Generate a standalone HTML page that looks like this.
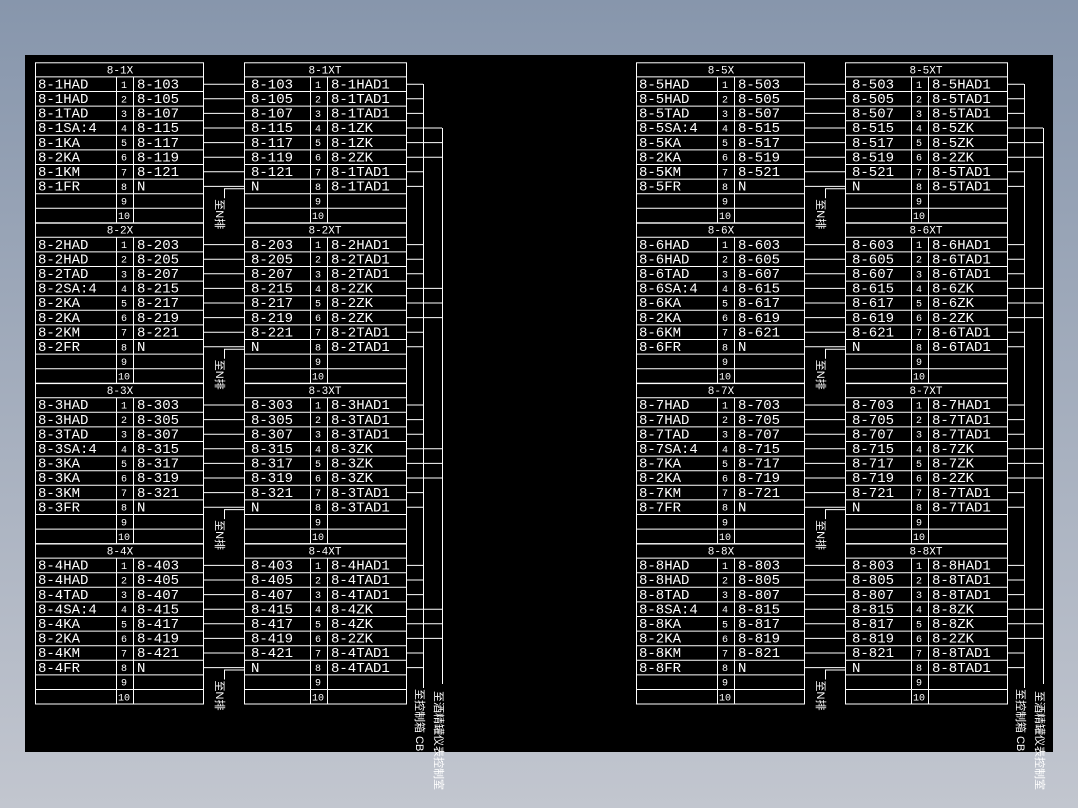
<!DOCTYPE html>
<html><head><meta charset="utf-8"><style>
html,body{margin:0;padding:0;width:1078px;height:808px;overflow:hidden;background:linear-gradient(#8796ac,#c2c6cf);}
svg{position:absolute;left:0;top:0}
.t{fill:#fff;font-family:"Liberation Mono",monospace;font-size:14px}
.h{fill:#fff;font-family:"Liberation Mono",monospace;font-size:11px;text-anchor:middle}
.n{fill:#fff;font-family:"Liberation Mono",monospace;font-size:10px;text-anchor:middle}
.c{fill:#fff;font-family:"Liberation Sans","Noto Sans CJK SC",sans-serif;font-size:11px}
</style></head><body>
<svg width="1078" height="808" viewBox="0 0 1078 808">
<rect x="25" y="55" width="1028" height="697" fill="#000"/>
<defs>
<g id="g" stroke="#fff" stroke-width="1" fill="none">
<rect x="35.5" y="0.5" width="168" height="160"/>
<rect x="244.5" y="0.5" width="162" height="160"/>
<path d="M35 14.6H204M35 29.2H204M35 43.8H204M35 58.4H204M35 73H204M35 87.6H204M35 102.2H204M35 116.8H204M35 131.4H204M35 146H204
M244 14.6H407M244 29.2H407M244 43.8H407M244 58.4H407M244 73H407M244 87.6H407M244 102.2H407M244 116.8H407M244 131.4H407M244 146H407
M116.5 14.6V160.5M133.5 14.6V160.5M310.5 14.6V160.5M327.5 14.6V160.5
M204 21.9H244M204 36.5H244M204 51.1H244M204 65.7H244M204 80.3H244M204 94.9H244M204 109.5H244M204 124.1H244
M224.5 134V126.5H244M224.5 134V136
M407 21.9H423M407 36.5H423M407 51.1H423M407 109.5H423M407 124.1H423
M407 65.7H442M407 80.3H442M407 94.9H442"/>
<g stroke="none" fill="#fff">
<text class="n" x="124" y="25.5">1</text><text class="n" x="124" y="40">2</text><text class="n" x="124" y="54.6">3</text><text class="n" x="124" y="69.2">4</text><text class="n" x="124" y="83.8">5</text><text class="n" x="124" y="98.4">6</text><text class="n" x="124" y="113">7</text><text class="n" x="124" y="127.6">8</text><text class="n" x="124" y="142.2">9</text><text class="n" x="124" y="156.8">10</text>
<text class="n" x="318" y="25.5">1</text><text class="n" x="318" y="40">2</text><text class="n" x="318" y="54.6">3</text><text class="n" x="318" y="69.2">4</text><text class="n" x="318" y="83.8">5</text><text class="n" x="318" y="98.4">6</text><text class="n" x="318" y="113">7</text><text class="n" x="318" y="127.6">8</text><text class="n" x="318" y="142.2">9</text><text class="n" x="318" y="156.8">10</text>
<text class="c" transform="translate(216,137) rotate(90)">至N排</text>
</g>
</g>
</defs>
<g stroke="#fff" stroke-width="1">
<path d="M423.5 84V688M442.5 128V684M1024.5 84V688M1043.5 128V684"/>
</g>
<text class="c" transform="translate(416,689) rotate(90)">至控制箱 CB</text>
<text class="c" transform="translate(435,691) rotate(90)">至酒精罐仪表控制室</text>
<text class="c" transform="translate(1017,689) rotate(90)">至控制箱 CB</text>
<text class="c" transform="translate(1036,691) rotate(90)">至酒精罐仪表控制室</text>

<use href="#g" transform="translate(0,62.3)"/><use href="#g" transform="translate(0,222.7)"/><use href="#g" transform="translate(0,383.1)"/><use href="#g" transform="translate(0,543.5)"/>
<use href="#g" transform="translate(601,62.3)"/><use href="#g" transform="translate(601,222.7)"/><use href="#g" transform="translate(601,383.1)"/><use href="#g" transform="translate(601,543.5)"/>

<g transform="translate(0,62.3)">
<text class="h" x="120" y="11">8-1X</text><text class="h" x="325" y="11">8-1XT</text>
<text class="t" y="26.1"><tspan x="38">8-1HAD</tspan><tspan x="137">8-103</tspan><tspan x="251">8-103</tspan><tspan x="331">8-1HAD1</tspan></text>
<text class="t" y="40.7"><tspan x="38">8-1HAD</tspan><tspan x="137">8-105</tspan><tspan x="251">8-105</tspan><tspan x="331">8-1TAD1</tspan></text>
<text class="t" y="55.3"><tspan x="38">8-1TAD</tspan><tspan x="137">8-107</tspan><tspan x="251">8-107</tspan><tspan x="331">8-1TAD1</tspan></text>
<text class="t" y="69.9"><tspan x="38">8-1SA:4</tspan><tspan x="137">8-115</tspan><tspan x="251">8-115</tspan><tspan x="331">8-1ZK</tspan></text>
<text class="t" y="84.5"><tspan x="38">8-1KA</tspan><tspan x="137">8-117</tspan><tspan x="251">8-117</tspan><tspan x="331">8-1ZK</tspan></text>
<text class="t" y="99.1"><tspan x="38">8-2KA</tspan><tspan x="137">8-119</tspan><tspan x="251">8-119</tspan><tspan x="331">8-2ZK</tspan></text>
<text class="t" y="113.7"><tspan x="38">8-1KM</tspan><tspan x="137">8-121</tspan><tspan x="251">8-121</tspan><tspan x="331">8-1TAD1</tspan></text>
<text class="t" y="128.3"><tspan x="38">8-1FR</tspan><tspan x="137">N</tspan><tspan x="251">N</tspan><tspan x="331">8-1TAD1</tspan></text>
</g>
<g transform="translate(0,222.7)">
<text class="h" x="120" y="11">8-2X</text><text class="h" x="325" y="11">8-2XT</text>
<text class="t" y="26.1"><tspan x="38">8-2HAD</tspan><tspan x="137">8-203</tspan><tspan x="251">8-203</tspan><tspan x="331">8-2HAD1</tspan></text>
<text class="t" y="40.7"><tspan x="38">8-2HAD</tspan><tspan x="137">8-205</tspan><tspan x="251">8-205</tspan><tspan x="331">8-2TAD1</tspan></text>
<text class="t" y="55.3"><tspan x="38">8-2TAD</tspan><tspan x="137">8-207</tspan><tspan x="251">8-207</tspan><tspan x="331">8-2TAD1</tspan></text>
<text class="t" y="69.9"><tspan x="38">8-2SA:4</tspan><tspan x="137">8-215</tspan><tspan x="251">8-215</tspan><tspan x="331">8-2ZK</tspan></text>
<text class="t" y="84.5"><tspan x="38">8-2KA</tspan><tspan x="137">8-217</tspan><tspan x="251">8-217</tspan><tspan x="331">8-2ZK</tspan></text>
<text class="t" y="99.1"><tspan x="38">8-2KA</tspan><tspan x="137">8-219</tspan><tspan x="251">8-219</tspan><tspan x="331">8-2ZK</tspan></text>
<text class="t" y="113.7"><tspan x="38">8-2KM</tspan><tspan x="137">8-221</tspan><tspan x="251">8-221</tspan><tspan x="331">8-2TAD1</tspan></text>
<text class="t" y="128.3"><tspan x="38">8-2FR</tspan><tspan x="137">N</tspan><tspan x="251">N</tspan><tspan x="331">8-2TAD1</tspan></text>
</g>
<g transform="translate(0,383.1)">
<text class="h" x="120" y="11">8-3X</text><text class="h" x="325" y="11">8-3XT</text>
<text class="t" y="26.1"><tspan x="38">8-3HAD</tspan><tspan x="137">8-303</tspan><tspan x="251">8-303</tspan><tspan x="331">8-3HAD1</tspan></text>
<text class="t" y="40.7"><tspan x="38">8-3HAD</tspan><tspan x="137">8-305</tspan><tspan x="251">8-305</tspan><tspan x="331">8-3TAD1</tspan></text>
<text class="t" y="55.3"><tspan x="38">8-3TAD</tspan><tspan x="137">8-307</tspan><tspan x="251">8-307</tspan><tspan x="331">8-3TAD1</tspan></text>
<text class="t" y="69.9"><tspan x="38">8-3SA:4</tspan><tspan x="137">8-315</tspan><tspan x="251">8-315</tspan><tspan x="331">8-3ZK</tspan></text>
<text class="t" y="84.5"><tspan x="38">8-3KA</tspan><tspan x="137">8-317</tspan><tspan x="251">8-317</tspan><tspan x="331">8-3ZK</tspan></text>
<text class="t" y="99.1"><tspan x="38">8-3KA</tspan><tspan x="137">8-319</tspan><tspan x="251">8-319</tspan><tspan x="331">8-3ZK</tspan></text>
<text class="t" y="113.7"><tspan x="38">8-3KM</tspan><tspan x="137">8-321</tspan><tspan x="251">8-321</tspan><tspan x="331">8-3TAD1</tspan></text>
<text class="t" y="128.3"><tspan x="38">8-3FR</tspan><tspan x="137">N</tspan><tspan x="251">N</tspan><tspan x="331">8-3TAD1</tspan></text>
</g>
<g transform="translate(0,543.5)">
<text class="h" x="120" y="11">8-4X</text><text class="h" x="325" y="11">8-4XT</text>
<text class="t" y="26.1"><tspan x="38">8-4HAD</tspan><tspan x="137">8-403</tspan><tspan x="251">8-403</tspan><tspan x="331">8-4HAD1</tspan></text>
<text class="t" y="40.7"><tspan x="38">8-4HAD</tspan><tspan x="137">8-405</tspan><tspan x="251">8-405</tspan><tspan x="331">8-4TAD1</tspan></text>
<text class="t" y="55.3"><tspan x="38">8-4TAD</tspan><tspan x="137">8-407</tspan><tspan x="251">8-407</tspan><tspan x="331">8-4TAD1</tspan></text>
<text class="t" y="69.9"><tspan x="38">8-4SA:4</tspan><tspan x="137">8-415</tspan><tspan x="251">8-415</tspan><tspan x="331">8-4ZK</tspan></text>
<text class="t" y="84.5"><tspan x="38">8-4KA</tspan><tspan x="137">8-417</tspan><tspan x="251">8-417</tspan><tspan x="331">8-4ZK</tspan></text>
<text class="t" y="99.1"><tspan x="38">8-2KA</tspan><tspan x="137">8-419</tspan><tspan x="251">8-419</tspan><tspan x="331">8-2ZK</tspan></text>
<text class="t" y="113.7"><tspan x="38">8-4KM</tspan><tspan x="137">8-421</tspan><tspan x="251">8-421</tspan><tspan x="331">8-4TAD1</tspan></text>
<text class="t" y="128.3"><tspan x="38">8-4FR</tspan><tspan x="137">N</tspan><tspan x="251">N</tspan><tspan x="331">8-4TAD1</tspan></text>
</g>

<g transform="translate(601,62.3)">
<text class="h" x="120" y="11">8-5X</text><text class="h" x="325" y="11">8-5XT</text>
<text class="t" y="26.1"><tspan x="38">8-5HAD</tspan><tspan x="137">8-503</tspan><tspan x="251">8-503</tspan><tspan x="331">8-5HAD1</tspan></text>
<text class="t" y="40.7"><tspan x="38">8-5HAD</tspan><tspan x="137">8-505</tspan><tspan x="251">8-505</tspan><tspan x="331">8-5TAD1</tspan></text>
<text class="t" y="55.3"><tspan x="38">8-5TAD</tspan><tspan x="137">8-507</tspan><tspan x="251">8-507</tspan><tspan x="331">8-5TAD1</tspan></text>
<text class="t" y="69.9"><tspan x="38">8-5SA:4</tspan><tspan x="137">8-515</tspan><tspan x="251">8-515</tspan><tspan x="331">8-5ZK</tspan></text>
<text class="t" y="84.5"><tspan x="38">8-5KA</tspan><tspan x="137">8-517</tspan><tspan x="251">8-517</tspan><tspan x="331">8-5ZK</tspan></text>
<text class="t" y="99.1"><tspan x="38">8-2KA</tspan><tspan x="137">8-519</tspan><tspan x="251">8-519</tspan><tspan x="331">8-2ZK</tspan></text>
<text class="t" y="113.7"><tspan x="38">8-5KM</tspan><tspan x="137">8-521</tspan><tspan x="251">8-521</tspan><tspan x="331">8-5TAD1</tspan></text>
<text class="t" y="128.3"><tspan x="38">8-5FR</tspan><tspan x="137">N</tspan><tspan x="251">N</tspan><tspan x="331">8-5TAD1</tspan></text>
</g>
<g transform="translate(601,222.7)">
<text class="h" x="120" y="11">8-6X</text><text class="h" x="325" y="11">8-6XT</text>
<text class="t" y="26.1"><tspan x="38">8-6HAD</tspan><tspan x="137">8-603</tspan><tspan x="251">8-603</tspan><tspan x="331">8-6HAD1</tspan></text>
<text class="t" y="40.7"><tspan x="38">8-6HAD</tspan><tspan x="137">8-605</tspan><tspan x="251">8-605</tspan><tspan x="331">8-6TAD1</tspan></text>
<text class="t" y="55.3"><tspan x="38">8-6TAD</tspan><tspan x="137">8-607</tspan><tspan x="251">8-607</tspan><tspan x="331">8-6TAD1</tspan></text>
<text class="t" y="69.9"><tspan x="38">8-6SA:4</tspan><tspan x="137">8-615</tspan><tspan x="251">8-615</tspan><tspan x="331">8-6ZK</tspan></text>
<text class="t" y="84.5"><tspan x="38">8-6KA</tspan><tspan x="137">8-617</tspan><tspan x="251">8-617</tspan><tspan x="331">8-6ZK</tspan></text>
<text class="t" y="99.1"><tspan x="38">8-2KA</tspan><tspan x="137">8-619</tspan><tspan x="251">8-619</tspan><tspan x="331">8-2ZK</tspan></text>
<text class="t" y="113.7"><tspan x="38">8-6KM</tspan><tspan x="137">8-621</tspan><tspan x="251">8-621</tspan><tspan x="331">8-6TAD1</tspan></text>
<text class="t" y="128.3"><tspan x="38">8-6FR</tspan><tspan x="137">N</tspan><tspan x="251">N</tspan><tspan x="331">8-6TAD1</tspan></text>
</g>
<g transform="translate(601,383.1)">
<text class="h" x="120" y="11">8-7X</text><text class="h" x="325" y="11">8-7XT</text>
<text class="t" y="26.1"><tspan x="38">8-7HAD</tspan><tspan x="137">8-703</tspan><tspan x="251">8-703</tspan><tspan x="331">8-7HAD1</tspan></text>
<text class="t" y="40.7"><tspan x="38">8-7HAD</tspan><tspan x="137">8-705</tspan><tspan x="251">8-705</tspan><tspan x="331">8-7TAD1</tspan></text>
<text class="t" y="55.3"><tspan x="38">8-7TAD</tspan><tspan x="137">8-707</tspan><tspan x="251">8-707</tspan><tspan x="331">8-7TAD1</tspan></text>
<text class="t" y="69.9"><tspan x="38">8-7SA:4</tspan><tspan x="137">8-715</tspan><tspan x="251">8-715</tspan><tspan x="331">8-7ZK</tspan></text>
<text class="t" y="84.5"><tspan x="38">8-7KA</tspan><tspan x="137">8-717</tspan><tspan x="251">8-717</tspan><tspan x="331">8-7ZK</tspan></text>
<text class="t" y="99.1"><tspan x="38">8-2KA</tspan><tspan x="137">8-719</tspan><tspan x="251">8-719</tspan><tspan x="331">8-2ZK</tspan></text>
<text class="t" y="113.7"><tspan x="38">8-7KM</tspan><tspan x="137">8-721</tspan><tspan x="251">8-721</tspan><tspan x="331">8-7TAD1</tspan></text>
<text class="t" y="128.3"><tspan x="38">8-7FR</tspan><tspan x="137">N</tspan><tspan x="251">N</tspan><tspan x="331">8-7TAD1</tspan></text>
</g>
<g transform="translate(601,543.5)">
<text class="h" x="120" y="11">8-8X</text><text class="h" x="325" y="11">8-8XT</text>
<text class="t" y="26.1"><tspan x="38">8-8HAD</tspan><tspan x="137">8-803</tspan><tspan x="251">8-803</tspan><tspan x="331">8-8HAD1</tspan></text>
<text class="t" y="40.7"><tspan x="38">8-8HAD</tspan><tspan x="137">8-805</tspan><tspan x="251">8-805</tspan><tspan x="331">8-8TAD1</tspan></text>
<text class="t" y="55.3"><tspan x="38">8-8TAD</tspan><tspan x="137">8-807</tspan><tspan x="251">8-807</tspan><tspan x="331">8-8TAD1</tspan></text>
<text class="t" y="69.9"><tspan x="38">8-8SA:4</tspan><tspan x="137">8-815</tspan><tspan x="251">8-815</tspan><tspan x="331">8-8ZK</tspan></text>
<text class="t" y="84.5"><tspan x="38">8-8KA</tspan><tspan x="137">8-817</tspan><tspan x="251">8-817</tspan><tspan x="331">8-8ZK</tspan></text>
<text class="t" y="99.1"><tspan x="38">8-2KA</tspan><tspan x="137">8-819</tspan><tspan x="251">8-819</tspan><tspan x="331">8-2ZK</tspan></text>
<text class="t" y="113.7"><tspan x="38">8-8KM</tspan><tspan x="137">8-821</tspan><tspan x="251">8-821</tspan><tspan x="331">8-8TAD1</tspan></text>
<text class="t" y="128.3"><tspan x="38">8-8FR</tspan><tspan x="137">N</tspan><tspan x="251">N</tspan><tspan x="331">8-8TAD1</tspan></text>
</g>
</svg>
</body></html>
